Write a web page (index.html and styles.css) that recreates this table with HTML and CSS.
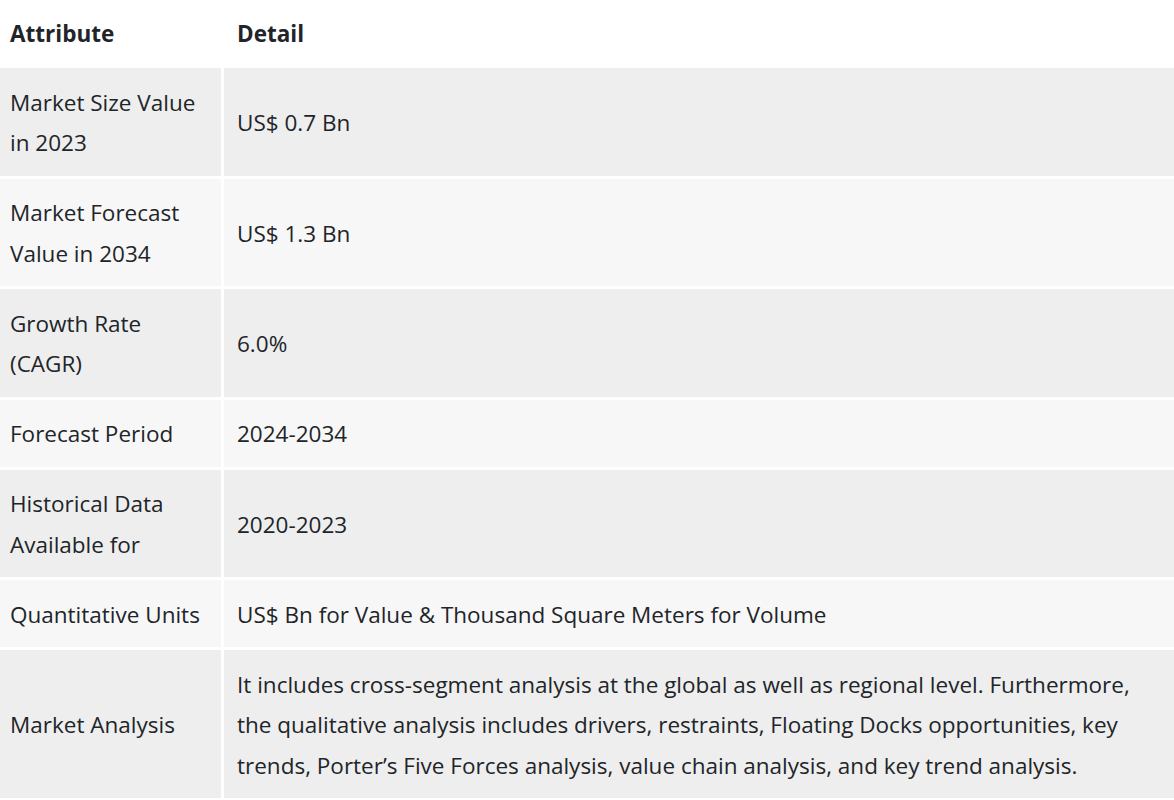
FILE: index.html
```html
<!DOCTYPE html>
<html lang="en">
<head>
<meta charset="utf-8">
<title>Market Attributes</title>
<link rel="stylesheet" href="styles.css">
</head>
<body>
<table class="spec">
  <thead>
    <tr><th class="col-attr">Attribute</th><th class="col-detail">Detail</th></tr>
  </thead>
  <tbody>
    <tr><td>Market Size Value in 2023</td><td>US$ 0.7 Bn</td></tr>
    <tr><td>Market Forecast Value in 2034</td><td>US$ 1.3 Bn</td></tr>
    <tr><td>Growth Rate (CAGR)</td><td>6.0%</td></tr>
    <tr><td>Forecast Period</td><td>2024-2034</td></tr>
    <tr><td>Historical Data Available for</td><td>2020-2023</td></tr>
    <tr><td>Quantitative Units</td><td>US$ Bn for Value &amp; Thousand Square Meters for Volume</td></tr>
    <tr><td>Market Analysis</td><td>It includes cross-segment analysis at the global as well as regional level. Furthermore, the qualitative analysis includes drivers, restraints, Floating Docks opportunities, key trends, Porter’s Five Forces analysis, value chain analysis, and key trend analysis.</td></tr>
  </tbody>
</table>
</body>
</html>
```
FILE: styles.css
```css
html, body {
  margin: 0;
  padding: 0;
  background: #ffffff;
}
body {
  font-family: "Open Sans", "Noto Sans", "Liberation Sans", sans-serif;
  font-size: 22.5px;
  color: #212529;
}
.spec {
  width: 1174px;
  border-collapse: separate;
  border-spacing: 0;
  table-layout: fixed;
}
.spec th,
.spec td {
  box-sizing: border-box;
}
.col-attr { width: 224px; }
.spec th {
  text-align: left;
  font-weight: 700;
  line-height: 41px;
  padding: 13px 10px 14px 10px;
}
.spec th + th { padding-left: 13px; }
.spec td {
  border-top: 3px solid #ffffff;
  padding: 14.75px 10px 11.75px 10px;
  line-height: 40.5px;
  vertical-align: middle;
}
.spec td:first-child {
  border-right: 3px solid #ffffff;
  padding-left: 10px;
}
.spec td + td { padding-left: 13px; padding-right: 20px; }
.spec tbody tr:nth-child(odd) td { background: #eeeeee; }
.spec tbody tr:nth-child(even) td { background: #f7f7f7; }
.spec tbody tr:first-child td { border-top: 0; }
```
